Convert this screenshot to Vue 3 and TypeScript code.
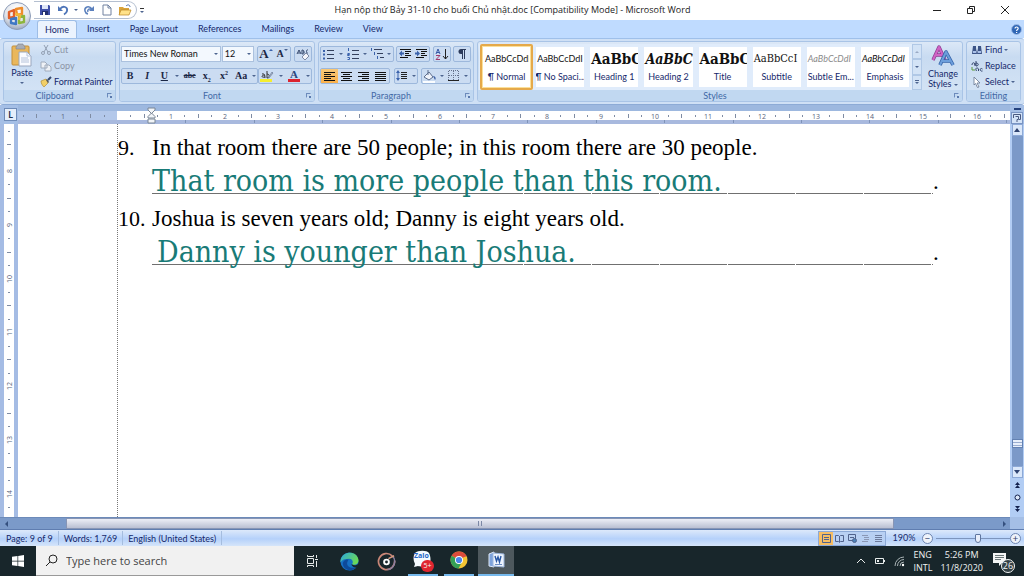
<script setup lang="ts">
import { ref } from 'vue'

const tabs = ['Home', 'Insert', 'Page Layout', 'References', 'Mailings', 'Review', 'View']
const activeTab = ref('Home')

interface StyleItem { sample: string; name: string; kind: string }
const styles: StyleItem[] = [
  { sample: 'AaBbCcDdI', name: '¶ Normal', kind: 'plain' },
  { sample: 'AaBbCcDdI', name: '¶ No Spaci...', kind: 'plain' },
  { sample: 'AaBbC', name: 'Heading 1', kind: 'head' },
  { sample: 'AaBbC', name: 'Heading 2', kind: 'head slant' },
  { sample: 'AaBbC', name: 'Title', kind: 'head' },
  { sample: 'AaBbCcI', name: 'Subtitle', kind: 'sub' },
  { sample: 'AaBbCcDdI', name: 'Subtle Em...', kind: 'plain slant faint' },
  { sample: 'AaBbCcDdI', name: 'Emphasis', kind: 'plain slant' },
]
const activeStyle = ref(0)

const questions = [
  { no: '9.', text: 'In that room there are 50 people; in this room there are 30 people.', answer: 'That room is more people than this room.', indent: false },
  { no: '10.', text: 'Joshua is seven years old; Danny is eight years old.', answer: 'Danny is younger than Joshua.', indent: true },
]

const unit = 215 / 4
const at = (n: number, origin: number) => Math.round(origin + n * unit)
const hTicks = Array.from({ length: 100 }, (_, i) => i - 7).map((q) => ({
  x: at(q / 4, 99),
  label: q % 4 === 0 && q !== 0 ? String(Math.abs(q / 4)) : '',
  half: q % 2 === 0,
  zero: q === 0,
}))
const vTicks = Array.from({ length: 60 }, (_, i) => i + 29).map((q) => ({
  y: at(q / 4 - 8, 47),
  label: q % 4 === 0 ? String(q / 4) : '',
  half: q % 2 === 0,
}))
const tabStops = Array.from({ length: 28 }, (_, i) => Math.round(99 + (i + 1) * 68.4))
const zoomLevel = ref(58)
</script>

<template>
  <div class="window">
    <header class="titlebar">
      <div class="quick">
        <button aria-label="Save"><svg width="12" height="12" viewBox="0 0 12 12"><path d="M1 1h9l1 1v9H1z" fill="#3f4fa8" /><path d="M3 1h6v4H3z" fill="#dfe6f8" /><path d="M3 7h6v4H3z" fill="#23306f" /><path d="M4 8h2v3H4z" fill="#fff" /></svg></button>
        <button aria-label="Undo"><svg width="12" height="12" viewBox="0 0 12 12"><path d="M3 5c3-4 8-2 7 2-.3 1.500-1.500 2.500-3 3.500" fill="none" stroke="#4d74b8" stroke-width="1.800" /><path d="M1 2v5h5z" fill="#4d74b8" /></svg></button>
        <button class="narrow" aria-label="Undo list"><i class="arr"></i></button>
        <button aria-label="Redo"><svg width="12" height="12" viewBox="0 0 12 12"><path d="M9 5C6 1 1 3 2 7c.3 1.500 1 2.500 3 3M5 8c-1-2 1-4 3-2.500" fill="none" stroke="#5b80bd" stroke-width="1.500" /><path d="M11 2v5H6z" fill="#5b80bd" /></svg></button>
        <button aria-label="New"><svg width="12" height="12" viewBox="0 0 12 12"><path d="M2 1h5l3 3v7H2z" fill="#fff" stroke="#7081a0" /><path d="M7 1v3h3" fill="none" stroke="#7081a0" /></svg></button>
        <button class="wide" aria-label="Open"><svg width="14" height="12" viewBox="0 0 14 12"><path d="M1 3h4l1 1h5v7H1z" fill="#d9a33a" /><path d="M3 6h10l-2 5H1z" fill="#ffe28a" stroke="#b98423" stroke-width=".7" /><path d="M8 2c2-2 4-1 4 1" fill="none" stroke="#4c6fa8" /></svg></button>
      </div>
      <button class="more" aria-label="Customize toolbar"><i></i><i class="arr"></i></button>
      <h1>Hạn nộp thứ Bảy 31-10 cho buổi Chủ nhật.doc [Compatibility Mode] - Microsoft Word</h1>
      <div class="winctl">
        <button aria-label="Minimize"><svg width="10" height="10"><path d="M1 5.500h8" stroke="#222" /></svg></button>
        <button aria-label="Restore"><svg width="10" height="10" fill="none" stroke="#222"><path d="M1.500 3.500h5v5h-5zM3.500 3V1.500h5v5H7" /></svg></button>
        <button aria-label="Close"><svg width="10" height="10"><path d="M1 1l8 8M9 1L1 9" stroke="#222" /></svg></button>
      </div>
    </header>
    <button class="office" aria-label="Office Button">
      <svg width="30" height="30" viewBox="0 0 30 30">
        <defs><radialGradient id="orb" cx=".5" cy=".25" r=".8"><stop offset="0" stop-color="#fff" /><stop offset=".6" stop-color="#dfe3ea" /><stop offset="1" stop-color="#8f9db5" /></radialGradient></defs>
        <circle cx="15" cy="15" r="13.500" fill="url(#orb)" stroke="#8d9cb8" />
        <g fill="none" stroke-width="2.400" stroke-linejoin="round">
          <path d="M7 11l5-2v7l-5 1z" stroke="#e0602a" /><path d="M14 8l6-1v6l-5 1z" stroke="#ee8d2c" />
          <path d="M9 18l5-1v6l-5-1z" stroke="#3f78c4" /><path d="M17 16l5-1v6l-5 1z" stroke="#8db53c" /><path d="M13 13l5 1-1 5" stroke="#f3b93a" />
        </g>
      </svg>
    </button>

    <nav class="tabs">
      <button v-for="t in tabs" :key="t" :class="{ on: t === activeTab }" @click="activeTab = t">{{ t }}</button>
      <button class="help" aria-label="Help"><svg width="11" height="11" viewBox="0 0 11 11"><circle cx="5.500" cy="5.500" r="5" fill="#2f66b5" stroke="#9dbbe6" /><path d="M4 4.500c0-2 3.200-2 3.200 0C7.200 5.700 5.600 5.500 5.600 7M5.600 8v1" fill="none" stroke="#fff" stroke-width="1.200" /></svg></button>
    </nav>

    <section class="ribbon">
      <div class="group clip">
        <div class="body">
          <button class="paste">
            <svg width="22" height="24" viewBox="0 0 22 24"><rect x="1" y="3" width="17" height="19" rx="1" fill="#e9b75c" stroke="#c38f3a" /><path d="M5 4c0-1 2-1 2-3h5c0 2 2 2 2 3v2H5z" fill="#a9adb5" stroke="#7c828c" stroke-width=".6" /><path d="M8 9h8l4 4v10H8z" fill="#fbfcff" stroke="#9aa7bd" /><path d="M16 9v4h4M10 15h7M10 17h8M10 19h8" fill="none" stroke="#b5c3da" /></svg>
            <span>Paste</span><i class="arr"></i>
          </button>
          <div class="stack">
            <button class="dim"><svg width="12" height="12" viewBox="0 0 12 12" fill="none" stroke="#93a0b3"><path d="M4 1l4 7M8 1L4 8" /><circle cx="3" cy="9" r="1.500" /><circle cx="9" cy="9" r="1.500" /></svg>Cut</button>
            <button class="dim"><svg width="12" height="12" viewBox="0 0 12 12" fill="#eef1f6" stroke="#a0abbc"><path d="M1 2h4l2 2v4H1zM5 5h4l2 2v4H5z" /></svg>Copy</button>
            <button><svg width="12" height="12" viewBox="0 0 12 12"><path d="M1 5l5-2 2 4-4 4c-1-1-3-3-3-6z" fill="#f2cf67" stroke="#a98428" stroke-width=".6" /><path d="M6 4l2 3 1-1-2-3z" fill="#555" /><path d="M8 4l3-3" stroke="#34496e" stroke-width="2" /></svg>Format Painter</button>
          </div>
        </div>
        <footer>Clipboard<i class="launch"></i></footer>
      </div>

      <div class="group font">
        <div class="body rows">
          <div class="row">
            <label class="pick family"><select aria-label="Font"><option>Times New Roman</option></select><i class="arr"></i></label>
            <label class="pick size"><select aria-label="Font size"><option>12</option></select><i class="arr"></i></label>
            <div class="box gapl"><button class="serif big" aria-label="Grow font">A<i class="arr up blue"></i></button><button class="serif mid" aria-label="Shrink font">A<i class="arr blue"></i></button></div>
            <div class="box gapl"><button aria-label="Clear formatting"><svg width="14" height="13" viewBox="0 0 14 13"><path d="M1 6l2-4 2 4M2 5h2M6 2v4c3 0 3-2 1-2 2 0 1-2-1-2M12 2c-2-1-2 4 0 3" fill="none" stroke="#33466b" /><path d="M6 9l4-4 3 3-4 4z" fill="#f4f5fa" stroke="#7f8ba5" /></svg></button></div>
          </div>
          <div class="row">
            <div class="box chars">
              <button class="serif"><b>B</b></button><button class="serif"><b><em>I</em></b></button><button class="serif"><b><u>U</u></b></button><button class="narrow" aria-label="Underline list"><i class="arr"></i></button>
              <button class="serif tiny"><b><s>abe</s></b></button><button class="serif"><b>x<sub>2</sub></b></button><button class="serif"><b>x<sup>2</sup></b></button><button class="serif"><b>Aa</b></button><button class="narrow" aria-label="Case list"><i class="arr"></i></button>
            </div>
            <div class="box paint">
              <button aria-label="Highlight"><svg width="14" height="14" viewBox="0 0 14 14"><path d="M0 10h12v3H0z" fill="#f5ee2e" /><path d="M2 5c3-1 3 3 3 4M5 6c-4 0-4 3 0 2M7 2v7c3 0 3-4 0-4" fill="none" stroke="#333" /><path d="M8 9l4-6 1 1-4 5z" fill="#b3bed2" stroke="#5a6b8a" stroke-width=".6" /></svg></button>
              <button class="narrow" aria-label="Highlight list"><i class="arr"></i></button>
              <button class="serif colour" aria-label="Font color"><span>A</span></button>
              <button class="narrow" aria-label="Color list"><i class="arr"></i></button>
            </div>
          </div>
        </div>
        <footer>Font<i class="launch"></i></footer>
      </div>

      <div class="group para">
        <div class="body rows">
          <div class="row spread">
            <div class="box lists">
              <button aria-label="Bullets"><svg width="12" height="12"><path d="M4 2.500h7M4 6.500h7M4 10.500h7" stroke="#34405c" /><path d="M0 2h2v2H0zM0 5.500h2v2H0zM0 9.500h2v2H0z" fill="#3a62ac" /></svg></button><button class="narrow" aria-label="Bullet list"><i class="arr"></i></button>
              <button aria-label="Numbering"><svg width="12" height="12"><path d="M5 2.500h7M5 6.500h7M5 10.500h7" stroke="#34405c" /><path d="M1.500 0v3M.5 5.500h2v1h-2v1h2M.5 9.500h2v2h-2" fill="none" stroke="#3a62ac" /></svg></button><button class="narrow" aria-label="Numbering list"><i class="arr"></i></button>
              <button aria-label="Multilevel list"><svg width="13" height="12"><path d="M3 1.500h8M6 5.500h6M9 9.500h4" stroke="#34405c" /><path d="M.5 0v3M3.500 4v3M6.500 8v3" stroke="#3a62ac" /></svg></button><button class="narrow" aria-label="Multilevel choices"><i class="arr"></i></button>
            </div>
            <div class="box">
              <button aria-label="Decrease indent"><svg width="13" height="12"><path d="M1 1.500h11M6 3.500h6M6 5.500h4M6 7.500h6M1 9.500h8" stroke="#111" /><path d="M0 5.500l3-3v2h2v2H3v2z" fill="#3a62ac" /></svg></button>
              <button aria-label="Increase indent"><svg width="13" height="12"><path d="M1 1.500h11M6 3.500h6M6 5.500h4M6 7.500h6M1 9.500h8" stroke="#111" /><path d="M5 5.500l-3-3v2H0v2h2v2z" fill="#3a62ac" /></svg></button>
            </div>
            <div class="box"><button aria-label="Sort"><svg width="14" height="13"><path d="M1 6l2-5 2 5M2 4.500h2" fill="none" stroke="#3457a5" /><path d="M1 7.500h4l-4 4h4" fill="none" stroke="#a13a6c" /><path d="M10.500 1v10M8 8l2.500 3L13 8" fill="none" stroke="#222" /></svg></button></div>
            <div class="box"><button aria-label="Show marks"><svg width="10" height="12"><path d="M5.500 1v10M7.500 1v10M4 1.500h5" stroke="#2c3a5a" fill="none" /><path d="M5 1H4a2.500 2.500 0 0 0 0 5h1z" fill="#2c3a5a" /></svg></button></div>
          </div>
          <div class="row spread">
            <div class="box aligns">
              <button class="lit" aria-label="Align left"><svg width="11" height="11"><path d="M0 1.500h11M0 3.500h7M0 5.500h11M0 7.500h7M0 9.500h11" stroke="#111" /></svg></button>
              <button aria-label="Center"><svg width="11" height="11"><path d="M0 1.500h11M2 3.500h7M0 5.500h11M2 7.500h7M0 9.500h11" stroke="#111" /></svg></button>
              <button aria-label="Align right"><svg width="11" height="11"><path d="M0 1.500h11M4 3.500h7M0 5.500h11M4 7.500h7M0 9.500h11" stroke="#111" /></svg></button>
              <button aria-label="Justify"><svg width="11" height="11"><path d="M0 1.500h11M0 3.500h11M0 5.500h11M0 7.500h11M0 9.500h11" stroke="#111" /></svg></button>
            </div>
            <div class="box"><button aria-label="Line spacing"><svg width="13" height="12"><path d="M5 2.500h6M5 4.500h6M5 6.500h6M5 8.500h6" stroke="#222" /><path d="M2 0L0 3h4zM2 11L0 8h4zM1.500 3h1v6h-1z" fill="#3a62ac" /></svg></button><button class="slim" aria-label="Spacing list"><i class="arr"></i></button></div>
            <div class="box fills">
              <button aria-label="Shading"><svg width="14" height="13"><path d="M1 7l5-5 4 5-4 3z" fill="#eef2fa" stroke="#5d6e8e" /><path d="M5 0v5" stroke="#5d6e8e" /><path d="M10 6c3 0 3 3 2 4z" fill="#3c5fa3" /><path d="M0 11h12v2H0z" fill="#fbfdff" /></svg></button><button class="narrow" aria-label="Shading list"><i class="arr"></i></button>
              <button aria-label="Borders"><svg width="12" height="12"><path d="M.5 1v9M5.500 1v9M10.500 1v9M1 .5h10M1 5.500h10" stroke="#66728c" stroke-dasharray="1 1" /><path d="M0 10.500h11" stroke="#222" /></svg></button><button class="narrow" aria-label="Border list"><i class="arr"></i></button>
            </div>
          </div>
        </div>
        <footer>Paragraph<i class="launch"></i></footer>
      </div>

      <div class="group stylesg">
        <div class="body">
          <div class="gallery">
            <button v-for="(s, i) in styles" :key="s.name" :class="{ on: i === activeStyle }" @click="activeStyle = i">
              <span class="sample" :class="s.kind">{{ s.sample }}</span><span>{{ s.name }}</span>
            </button>
          </div>
          <div class="scroller"><button aria-label="Previous row"><i class="arr up"></i></button><button aria-label="Next row"><i class="arr"></i></button><button aria-label="More styles"><i class="bar"></i><i class="arr"></i></button></div>
          <button class="change">
            <svg width="24" height="24" viewBox="0 0 24 24"><g fill="none" stroke-linejoin="round"><path d="M2 16L8 3l6 13M5 11h7" stroke="#8c3d91" stroke-width="3.400" /><path d="M2 16L8 3l6 13M5 11h7" stroke="#cf63c4" stroke-width="2" /><path d="M9 21l6-13 7 13M11 17h8" stroke="#3563a8" stroke-width="3.600" /><path d="M9 21l6-13 7 13M11 17h8" stroke="#6c9edb" stroke-width="2" /></g></svg>
            <span>Change</span><span>Styles <i class="arr"></i></span>
          </button>
        </div>
        <footer>Styles<i class="launch"></i></footer>
      </div>

      <div class="group edit">
        <div class="body">
          <div class="stack">
            <button><svg width="12" height="12"><path d="M2 2h3v2l1 6H1zM7 2h3l1 8H6l1-6z" fill="#3c5487" /><path d="M2 7h3v2H2zM7 7h3v2H7z" fill="#a9c0e8" /></svg>Find<i class="arr"></i></button>
            <button><svg width="12" height="12"><path d="M1 5c0-3 3-3 3 0M4 3v3M5 1v5c3 0 3-3 0-3M5.500 11c-2-3 1-4 2-2v2M11.500 9c-3-2-3 3 0 2" fill="none" stroke="#34456c" /><path d="M1 7v3h3" fill="none" stroke="#5c9a3c" /></svg>Replace</button>
            <button><svg width="12" height="12"><path d="M3 1l6 6H6l2 4-1.500.500-2-4L3 9z" fill="#fff" stroke="#66758f" stroke-width=".8" /></svg>Select<i class="arr"></i></button>
          </div>
        </div>
        <footer class="centered">Editing</footer>
      </div>
    </section>

    <div class="workspace">
      <button class="tabkind" aria-label="Left tab">L</button>
      <div class="hruler">
        <svg class="scale" width="100%" height="9">
          <rect x="0" y="0" width="99" height="9" fill="#b3c8ea" />
          <template v-for="t in hTicks" :key="t.x">
            <text v-if="t.label" :x="t.x" y="8" text-anchor="middle">{{ t.label }}</text>
            <rect v-else-if="!t.zero" :x="t.x" :y="t.half ? 3 : 4" width="1" :height="t.half ? 4 : 2" fill="#7f8ca3" />
          </template>
        </svg>
        <svg class="stops" width="100%" height="4"><rect v-for="x in tabStops" :key="x" :x="x" y="0" width="1" height="3" fill="#7f93b8" /></svg>
        <svg class="indent" width="9" height="17"><path d="M1 1h7v2L4.500 6.500 1 3zM1 11V9.500L4.500 6 8 9.500V11zM1 12h7v4H1z" fill="#f2f5f8" stroke="#7b8796" /></svg>
      </div>
      <div class="corner"><button aria-label="Split"></button><button class="view" aria-label="View ruler"><svg width="10" height="10" fill="none" stroke="#4a5a80"><path d="M1.500 5V1.500h7v5H7M3.500 3.500h3v3H5V9" /></svg></button></div>

      <svg class="vruler" width="18" height="100%">
        <rect width="18" height="100%" fill="#a5bce4" /><rect x="4" width="10" height="100%" fill="#fff" />
        <template v-for="t in vTicks" :key="t.y">
          <text v-if="t.label" x="0" y="0" text-anchor="middle" :transform="`translate(12 ${t.y}) rotate(-90)`">{{ t.label }}</text>
          <rect v-else :x="t.half ? 7 : 8" :y="t.y" :width="t.half ? 4 : 2" height="1" fill="#7f8ca3" />
        </template>
      </svg>
      <main class="page">
        <ol class="sheet">
          <li v-for="q in questions" :key="q.no">
            <span class="no">{{ q.no }}</span>
            <p class="ask">{{ q.text }}</p>
            <p class="answer"><span class="written" :class="{ shift: q.indent }">{{ q.answer }}</span></p>
            <span class="stop">.</span>
          </li>
        </ol>
      </main>
      <div class="vscroll">
        <button aria-label="Scroll up"><i class="tri up"></i></button>
        <div class="track"><div class="thumb"></div></div>
        <button aria-label="Scroll down"><i class="tri"></i></button>
        <div class="browse">
          <button aria-label="Previous page"><svg width="7" height="7"><path d="M3.500 0L6 3H1zM3.500 3L6 6H1z" fill="#14224e" /></svg></button>
          <button aria-label="Select browse object"><svg width="7" height="7"><circle cx="3.500" cy="3.500" r="2.500" fill="#dce8fa" stroke="#14224e" /></svg></button>
          <button aria-label="Next page"><svg width="7" height="7"><path d="M3.500 3L6 0H1zM3.500 6L6 3H1z" fill="#14224e" /></svg></button>
        </div>
      </div>
      <div class="hscroll"><button aria-label="Scroll left"><i class="tri left"></i></button><div class="hthumb"><i></i><i></i></div><button aria-label="Scroll right"><i class="tri right"></i></button></div>
      <div class="fill"></div>
    </div>

    <div class="status">
      <span>Page: 9 of 9</span><span>Words: 1,769</span><span>English (United States)</span>
      <div class="views">
        <button class="on" aria-label="Print layout"><svg width="9" height="9" fill="none" stroke="#50628c"><path d="M.5.5h8v8h-8zM2 3.500h5M2 5.500h5" /></svg></button>
        <button aria-label="Reading"><svg width="9" height="9" fill="none" stroke="#50628c"><path d="M.5 1.500h3l1 1 1-1h3v6h-3l-1 1-1-1h-3zM4.500 2v6" /></svg></button>
        <button aria-label="Web layout"><svg width="9" height="9" fill="none" stroke="#50628c"><path d="M.5.5h7v6h-7zM2 3.500h4" /><circle cx="6.500" cy="6.500" r="2" fill="#4c82b8" /></svg></button>
        <button aria-label="Outline"><svg width="9" height="9" stroke="#8a97b5"><path d="M1 1.500h6M3 3.500h5M3 5.500h5M1 7.500h6" /></svg></button>
        <button aria-label="Draft"><svg width="9" height="9" stroke="#6c7a9c"><path d="M1 1.500h7M1 3.500h7M1 5.500h7M1 7.500h7" /></svg></button>
      </div>
      <button class="pct">190%</button>
      <button class="round" aria-label="Zoom out">−</button>
      <input v-model="zoomLevel" type="range" min="0" max="100" aria-label="Zoom" />
      <button class="round" aria-label="Zoom in">+</button>
    </div>

    <footer class="taskbar">
      <button class="start" aria-label="Start"><svg width="12" height="12"><path d="M0 1.700L5.500 1v4.700H0zM6.200.900L12 0v5.700H6.200zM0 6.400h5.500V11L0 10.300zM6.200 6.400H12V12l-5.800-.9z" fill="#fff" /></svg></button>
      <label class="search"><svg width="13" height="13" fill="none" stroke="#222"><circle cx="8" cy="5" r="4" /><path d="M5 8l-4 4" /></svg><input type="text" placeholder="Type here to search" aria-label="Search" /></label>
      <button class="tv" aria-label="Task View"><svg width="13" height="12" fill="none" stroke="#e6eaea"><path d="M1.500 3.500h6v5h-6zM1 .5h1M1.500 0v1.500h6V0M1.500 12v-1.500h6V12M10.500 0v3M10.500 6v6M9 4.500h3" /></svg></button>
      <button class="app" aria-label="Edge">
        <svg width="19" height="19" viewBox="0 0 20 20"><defs><linearGradient id="eg" x1="0" y1="0" x2="1" y2=".5"><stop offset="0" stop-color="#2aa7e0" /><stop offset="1" stop-color="#6bd957" /></linearGradient></defs><circle cx="10" cy="10" r="9.500" fill="#1670c4" /><path d="M.5 9C2-2 19-2 19.500 9c0 4-4 5-7 4 2-2 1-6-3-6C5 7 2 8 .5 11z" fill="url(#eg)" /><path d="M8 10c-2 4 2 8 9 6-5 6-13 3-14-3-.4-3 3-6 6-5z" fill="#0d4a9a" /><path d="M12.500 13c2 1.500 5 1 6.500-.5l1 3-2 1c-3 0-5-1-6-3z" fill="#18262b" /></svg>
      </button>
      <button class="app" aria-label="Music"><svg width="19" height="19" viewBox="0 0 20 20" fill="none"><path d="M16 4a8.500 8.500 0 1 0 2.500 5" stroke="#c98778" stroke-width="1.800" /><path d="M16 4a8.500 8.500 0 0 1-5 14.500" stroke="#8b7fa0" stroke-width="1.500" /><path d="M12 7l6-3" stroke="#d89b80" stroke-width="1.600" /><circle cx="10" cy="10.500" r="2.500" stroke="#fff" stroke-width="2" /></svg></button>
      <button class="app running" aria-label="Zalo"><svg width="21" height="20" viewBox="0 0 21 20"><path d="M2 3c3-3 12-3 14 0 2 4 2 9 0 12-3 2-9 2-11 1l-4 1 1-3C0 10 0 6 2 3z" fill="#f5faff" /></svg><span class="zalo">Zalo</span><span class="badge">5+</span></button>
      <button class="app running" aria-label="Chrome"><svg width="18" height="18" viewBox="0 0 18 18"><circle cx="9" cy="9" r="8.500" fill="#f4c534" /><path d="M9 9L1.600 4.800A8.500 8.500 0 0 1 16.400 4.800z" fill="#dc4c3c" /><path d="M9 9L1.600 4.800A8.500 8.500 0 0 0 8.500 17.500L12 11z" fill="#35a056" /><path d="M9 5h7.400" stroke="#dc4c3c" /><circle cx="9" cy="9" r="4" fill="#fff" /><circle cx="9" cy="9" r="3.100" fill="#4a85ea" /></svg></button>
      <button class="app running active" aria-label="Word"><svg width="19" height="18" viewBox="0 0 19 18"><path d="M2 3l5-2v15l-5-1z" fill="#7ea3dc" stroke="#dfe9f8" /><path d="M6 2l11 1v13l-11-1z" fill="#eef4fd" stroke="#9db6dc" /><path d="M8 5l1.500 5L11 6l1.500 5L14 5" fill="none" stroke="#2857a5" stroke-width="1.400" /><path d="M8 13.500h7" stroke="#6c8dc4" /></svg></button>
      <div class="tray">
        <svg width="10" height="8" fill="none" stroke="#e8ecec"><path d="M1 6l4-4 4 4" /></svg>
        <svg width="12" height="8" fill="none" stroke="#e8ecec"><path d="M1.500 1.500h8v5h-8zM10.500 3v2" /><path d="M3 3h2v2H3z" fill="#e8ecec" stroke="none" /></svg>
        <svg width="11" height="11" fill="none" stroke="#a8b2b4"><path d="M1 10A9 9 0 0 1 10 1M3.500 10A6.500 6.500 0 0 1 10 3.500M6 10a4 4 0 0 1 4-4" /><circle cx="9" cy="9" r="1.200" fill="#fff" stroke="none" /></svg>
        <p class="lang">ENG<br />INTL</p>
        <p class="clock">5:26 PM<br />11/8/2020</p>
        <button class="note" aria-label="Notifications"><svg width="13" height="14"><path d="M0 0h13v10H9l-3 3v-3H0z" fill="#f3f5f5" /><path d="M2 2.500h9M2 4.500h9M2 6.500h6" stroke="#6a7779" /></svg><span>26</span></button>
      </div>
    </footer>
  </div>
</template>

<style>
body { margin: 0; }
</style>

<style scoped>
.window { position: relative; display: flex; flex-direction: column; height: 100vh; overflow: hidden; background: #fff; font-family: Lato, "Open Sans", sans-serif; font-size: 9px; line-height: 12px; color: #15286b; }
.window * { box-sizing: border-box; }
button { display: inline-flex; align-items: center; justify-content: center; margin: 0; padding: 0; border: 0; background: none; color: inherit; font: inherit; }
svg { flex: none; display: block; }
p, h1, ol { margin: 0; padding: 0; font: inherit; }
.arr { display: inline-block; flex: none; border: 2px solid transparent; border-top-color: #4d648f; border-bottom: 0; }
.arr.up { border-bottom: 2px solid #9aa9c4; border-top: 0; }

.titlebar { flex: none; display: flex; align-items: center; height: 20px; padding-left: 34px; }
.quick { display: flex; align-items: center; height: 18px; padding: 0 2px; border: 1px solid #b4bfd0; border-left: 0; border-radius: 0 9px 9px 0; }
.quick button { width: 18px; height: 16px; }
.quick .narrow { width: 8px; }
.more { flex-direction: column; gap: 2px; width: 10px; }
.more i:first-child { width: 4px; height: 1px; background: #333; }
h1 { flex: 1; margin-right: 54px; text-align: center; color: #1b1b1b; white-space: nowrap; font-family: "Open Sans", "Noto Sans", sans-serif; font-size: 9px; }
.winctl { display: flex; gap: 24px; padding-right: 14px; }
.office { position: absolute; left: 2px; top: 1px; z-index: 2; }

.tabs { flex: none; display: flex; align-items: flex-end; height: 18px; padding: 0 2px 0 37px; background: #bfdbff; }
.tabs button { height: 18px; padding: 0 10px; }
.tabs .on { padding: 0 7px; border: 1px solid #9dbde6; border-bottom: 0; border-radius: 3px 3px 0 0; background: #ebf3fe; }
.tabs .help { margin-left: auto; padding: 0; }

.ribbon { flex: none; display: flex; gap: 3px; padding: 2px 3px; height: 67px; background: #cfe0f5; border-top: 1px solid #9fc0ea; border-bottom: 1px solid #8dabd6; border-radius: 3px; }
.group { display: flex; flex-direction: column; border: 1px solid #a9c4e6; border-radius: 3px; background: linear-gradient(#dce8f7, #c8dbf1 25%, #d6e5f6); overflow: hidden; }
.group .body { flex: 1; display: flex; }
.group footer { display: flex; align-items: center; justify-content: center; height: 11px; background: #c1d8f1; color: #4269a6; position: relative; padding-right: 10px; }
.group footer.centered { padding-right: 0; }
.launch { position: absolute; right: 3px; top: 3px; width: 5px; height: 5px; border: 1px solid #6c8bbc; border-right-color: #cfe0f5; border-bottom-color: #cfe0f5; }
.launch::after { content: ""; position: absolute; left: 2px; top: 2px; width: 2px; height: 2px; background: #5a79ad; }
.clip { width: 113px; }
.paste { flex-direction: column; justify-content: flex-start; width: 36px; padding-top: 1px; }
.paste .arr { margin-top: 3px; }
.stack { display: flex; flex-direction: column; align-items: flex-start; }
.stack button { height: 16px; gap: 2px; }
.dim { color: #8b94a5; }
.font { width: 196px; }
.para { width: 156px; }
.rows { flex-direction: column; gap: 6px; padding: 4px 2px 0 1px; }
.row { display: flex; height: 16px; }
.spread { justify-content: space-between; }
.pick { position: relative; display: flex; height: 16px; border: 1px solid #abc1de; background: #f3f8fe; }
.pick + .pick { margin-left: 1px; }
.pick select { appearance: none; width: 100%; border: 0; padding: 0 2px; background: none; font: inherit; color: #111; outline: 0; }
.pick .arr { position: absolute; right: 2px; top: 6px; }
.family { width: 102px; }
.size { width: 33px; }
.box { display: flex; align-items: stretch; height: 16px; border: 1px solid #9db8dc; border-radius: 2px; background: #cbdcf2; }
.gapl { margin-left: 3px; }
.box button { width: 16px; }
.box .narrow { width: 7px; }
.box .slim { width: 6px; }
.aligns button { width: 17px; }
.chars { width: 138px; justify-content: space-between; }
.paint { width: 54px; justify-content: space-between; }
.lists .narrow, .fills .narrow { width: 8px; }
.serif { font-family: "Liberation Serif", serif; color: #1b2745; font-size: 10px; }
.tiny { font-size: 8px; }
.big { font-size: 13px; font-weight: bold; }
.mid { font-size: 10px; font-weight: bold; }
.serif .blue { align-self: flex-start; margin-top: 2px; }
.serif .blue.up { border-bottom-color: #3a62ac; }
.serif sup, .serif sub { font-size: 6px; line-height: 0; }
.colour { align-items: flex-start; }
.colour span { width: 12px; height: 13px; color: #2a477f; font-size: 11px; line-height: 11px; font-weight: bold; border-bottom: 3px solid #dc2430; }
.lit { background: linear-gradient(#f8c878, #fbb14a); }

.stylesg { flex: 1; min-width: 0; }
.stylesg .body { padding: 2px 1px 0; }
.gallery { flex: 1; display: grid; grid-template-columns: repeat(8, 1fr); background: #e0ecfb; }
.gallery button { flex-direction: column; min-width: 0; margin: 3px; background: #fff; white-space: nowrap; overflow: hidden; justify-content: space-between; padding: 3px 0 4px; }
.gallery .on { margin: 0 0 0 1px; padding: 4px 2px 5px; border: 2px solid #e5a94a; border-radius: 2px; box-shadow: inset 0 0 0 1px #fbe09a; }
.sample { width: 100%; padding-left: 1px; overflow: hidden; text-align: left; line-height: 18px; color: #111; }
.head { font: bold 15px/18px "DejaVu Serif Condensed", "DejaVu Serif", serif; }
.sub { font: 11px/18px "DejaVu Serif Condensed", "DejaVu Serif", serif; }
.slant { font-style: italic; }
.faint { color: #8b8b8b; }
.head.slant { font-size: 14px; }
.scroller { display: flex; flex-direction: column; width: 10px; margin-right: 3px; }
.scroller button { flex: 1; flex-direction: column; gap: 1px; border: 1px solid #b0c8e6; background: #d3e3f6; }
.bar { width: 4px; height: 1px; background: #4d648f; }
.change { flex-direction: column; justify-content: flex-start; width: 36px; line-height: 10px; }
.change svg { margin-bottom: 1px; }
.change .arr { vertical-align: middle; }
.edit { width: 55px; }
.edit .stack { padding-left: 4px; }

.workspace { flex: 1; min-height: 0; display: grid; grid-template: 19px 1fr 12px / 18px 1fr 14px; background: #a5bfe6; }
.tabkind { margin: 3px 0 0 4px; width: 13px; height: 13px; border: 1px solid #6f8cb9; background: #e4eefb; font-weight: bold; color: #26334f; }
.hruler { position: relative; padding-top: 6px; min-width: 0; overflow: hidden; background: #9db8df; }
.hruler text, .vruler text { font-family: "Open Sans", sans-serif; font-size: 7px; fill: #59657c; }
.scale { background: #fff; }
.stops { background: #a8b9de; }
.indent { position: absolute; left: 129px; top: 2px; }
.corner { display: flex; flex-direction: column; align-items: center; gap: 2px; padding-top: 3px; }
.corner button { width: 7px; height: 2px; background: #24417c; }
.corner .view { width: 12px; height: 12px; background: #d3e3f8; border: 1px solid #7a95c4; }
.page { min-width: 0; background: #fff; overflow: hidden; }
.sheet { height: 100%; margin-left: 99px; padding: 10px 71px 0 0; list-style: none; border-left: 1px dotted #777; font-family: "Liberation Serif", serif; color: #000; }
.sheet li { display: grid; grid-template: 28px 43px / 34px 1fr 6px; font-size: 23px; line-height: 28px; white-space: nowrap; }
.no { font-size: 22px; }
.ask { grid-column: 2 / 4; }
.answer { grid-column: 2; height: 32px; background: repeating-linear-gradient(90deg, #fff 0 1px, transparent 1px 68px) 371px 100% / 100% 1px no-repeat, linear-gradient(#707070, #707070) 0 100% / 100% 1px no-repeat; }
.written { display: block; color: #197b77; font: 30px/38px "DejaVu Serif Condensed", "DejaVu Serif", serif; }
.shift { padding-left: 5px; }
.stop { padding-top: 6px; }
.vscroll { display: flex; flex-direction: column; align-items: center; background: #b2cdf4; }
.vscroll > button { width: 11px; height: 12px; border: 1px solid #8da9d6; background: #dbe8fa; }
.track { flex: 1; display: flex; flex-direction: column; justify-content: flex-end; width: 11px; padding-bottom: 18px; background: #7b99c8; }
.thumb { height: 9px; border: 1px solid #6381b2; background: repeating-linear-gradient(#e8effa 0 2px, #9aadd0 2px 3px); }
.browse { display: flex; flex-direction: column; gap: 5px; padding: 4px 0; }
.tri { border: 3px solid transparent; border-top: 4px solid #2f4370; border-bottom: 0; }
.tri.up { border-top: 0; border-bottom: 4px solid #2f4370; }
.tri.left { border: 3px solid transparent; border-right: 3px solid #35507f; border-left: 0; }
.tri.right { border: 3px solid transparent; border-left: 3px solid #35507f; border-right: 0; }
.hscroll { grid-column: 1 / 3; display: flex; align-items: stretch; background: #7b9ac9; border-top: 1px solid #6c8ab9; }
.hscroll button { width: 12px; }
.hscroll button:last-child { margin-left: auto; }
.hthumb { display: flex; align-items: center; justify-content: center; gap: 2px; width: 82%; margin-left: 54px; background: linear-gradient(#eceef6, #b9bfd2); border: 1px solid #8795b5; }
.hthumb i { width: 1px; height: 5px; background: #7c88a6; }

.status { flex: none; display: flex; align-items: center; height: 17px; padding-left: 1px; background: linear-gradient(#dde9fa, #b5d1fa 55%, #d5e5fa); border-top: 1px solid #5f7db0; }
.status span { height: 14px; padding: 0 5px; line-height: 15px; border-right: 1px solid #a5bddf; }
.views { display: flex; margin-left: auto; border: 1px solid #8ca9d6; background: #b8d0f3; }
.views button { width: 13px; height: 13px; }
.views .on { width: 14px; background: #f6bd63; }
.pct { width: 36px; }
.round { width: 11px; height: 11px; border: 1px solid #6d85b0; border-radius: 50%; background: #eef3fb; font-size: 10px; line-height: 8px; color: #33456c; margin-right: 3px; }
.status input { appearance: none; width: 74px; height: 10px; margin: 0; background: linear-gradient(#7d95bd, #7d95bd) center / 100% 1px no-repeat; }
.status input::-webkit-slider-thumb { appearance: none; width: 6px; height: 9px; border: 1px solid #5f769f; border-radius: 1px 1px 3px 3px; background: #e8eefa; }

.taskbar { flex: none; display: flex; align-items: stretch; height: 30px; background: #18262b; color: #f0f3f3; font-family: "Open Sans", sans-serif; }
.start { width: 36px; }
.search { display: flex; align-items: center; gap: 8px; width: 258px; padding-left: 9px; background: #f1f1f1; border-bottom: 1px solid #999; }
.search input { flex: 1; min-width: 0; border: 0; padding: 0; background: none; outline: 0; font: 11px/14px "Open Sans", sans-serif; }
.search input::placeholder { color: #444; opacity: 1; }
.tv { width: 37px; }
.app { position: relative; width: 37px; }
.running { border-bottom: 2px solid #76b9ed; margin: 0 3px; width: 30px; }
.active { background: #4d585d; margin: 0 0 0 1px; width: 36px; }
.zalo { position: absolute; left: 6px; top: 6px; color: #2467c9; font-weight: bold; font-size: 7px; line-height: 8px; }
.badge { position: absolute; left: 13px; top: 14px; width: 13px; height: 12px; border-radius: 6px; background: #e02630; font-size: 7px; line-height: 12px; }
.tray { display: flex; align-items: center; gap: 8px; margin-left: auto; padding-right: 9px; }
.tray p { font-size: 9px; line-height: 13px; }
.clock { text-align: center; }
.note { position: relative; width: 22px; height: 24px; justify-content: flex-start; align-items: flex-start; margin-left: 2px; padding-top: 4px; }
.note span { position: absolute; right: 0; bottom: 0; width: 14px; height: 14px; border: 1px solid #f3f5f5; border-radius: 50%; background: #344146; font-size: 9px; line-height: 12px; }
</style>
